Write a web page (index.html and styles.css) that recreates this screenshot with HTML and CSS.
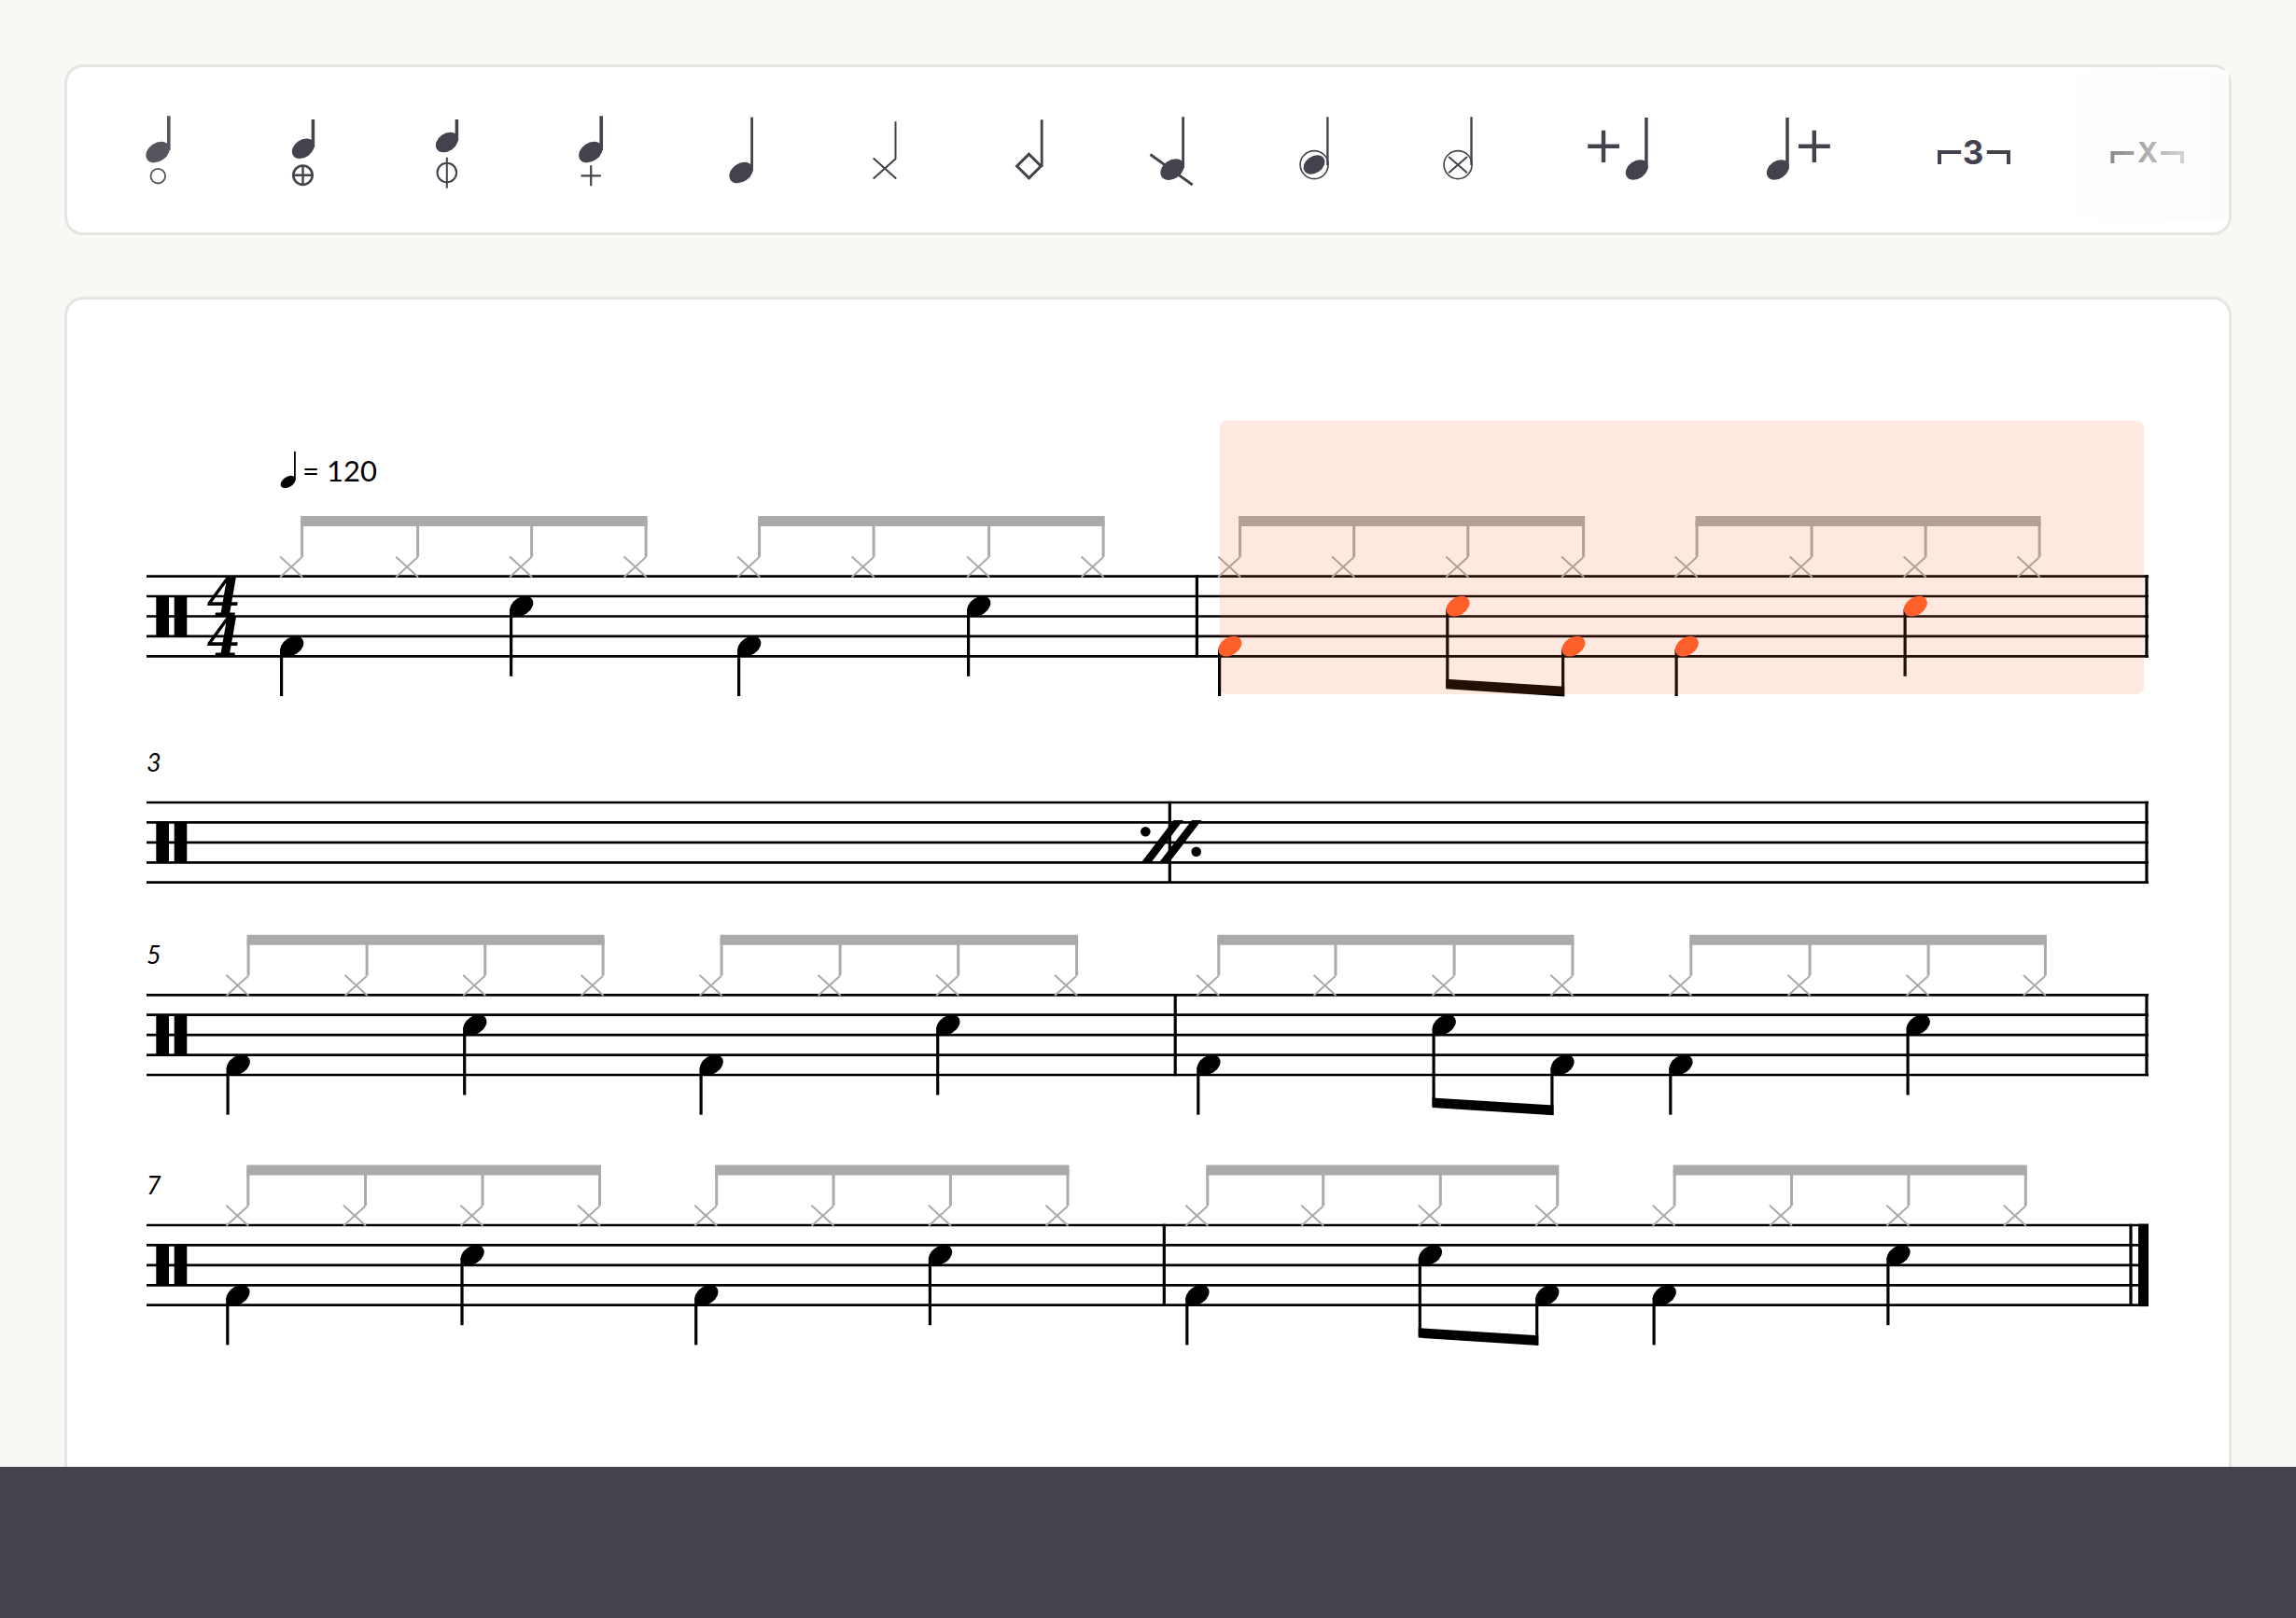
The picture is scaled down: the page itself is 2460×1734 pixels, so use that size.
FILE: index.html
```html
<!DOCTYPE html>
<html lang="en">
<head>
<meta charset="utf-8">
<title>Drum score editor</title>
<meta name="viewport" content="width=device-width, initial-scale=1">
<link rel="stylesheet" href="styles.css">
</head>
<body>
<svg class="defs" aria-hidden="true">
  <defs>
    <!-- Note heads, centred on 0,0 -->
    <ellipse id="head" rx="13.6" ry="9.5" transform="rotate(-33)"/>
    <ellipse id="tool-head" rx="13.8" ry="9.9" transform="rotate(-35)"/>
    <ellipse id="tool-head-small" rx="13" ry="9.4" transform="rotate(-35)"/>
    <!-- Origin of the score parts: note centre, top staff line -->
    <g id="hat">
      <path class="hat-x" d="M-12.4 -21.2L11.6 .8M-12.4 .8L11.1 -20.6"/>
      <path class="hat-stem" d="M11.1 -20.8V-60"/>
    </g>
    <path id="kick-stem" class="stem" d="M-10.9 78V128.4"/>
    <path id="snare-stem" class="stem" d="M-10.9 35V107.2"/>
    <path id="snare-stem-long" class="stem" d="M-10.9 35V119"/>
    <use id="kick-head" href="#head" x="0.3" y="75"/>
    <use id="snare-head" href="#head" x="0.3" y="32.1"/>
    <g id="kick"><use href="#kick-stem"/><use href="#kick-head"/></g>
    <g id="snare"><use href="#snare-stem"/><use href="#snare-head"/></g>
    <g id="snare-long"><use href="#snare-stem-long"/><use href="#snare-head"/></g>
    <g id="clef"><rect x="10.3" y="21.4" width="13.7" height="43"/><rect x="29.7" y="21.4" width="13.6" height="43"/></g>
    <path id="staff" class="staff" d="M0 0H2145M0 21.4H2145M0 42.9H2145M0 64.3H2145M0 85.7H2145"/>
  </defs>
</svg>

<main class="workspace">
  <section class="card toolbar" aria-label="Note tools">
    <div class="tools">
      <button class="tool" type="button" aria-label="Open">
        <svg class="icon icon-soft" viewBox="0 0 154 177"><use href="#tool-head" x="77" y="91"/><path stroke-width="3.6" d="M88.8 52.3V89"/><circle class="line" cx="77.3" cy="116.7" r="7.8" stroke-width="1.8"/></svg>
      </button>
      <button class="tool" type="button" aria-label="Half open">
        <svg class="icon" viewBox="0 0 154 177"><use href="#tool-head-small" x="78.8" y="87.2"/><path stroke-width="3.5" d="M89.4 56V86"/><circle class="line" cx="78.5" cy="115.7" r="10.2" stroke-width="2.6"/><path stroke-width="2.4" d="M68.5 115.7H88.5M78.5 105.7V125.7"/></svg>
      </button>
      <button class="tool" type="button" aria-label="Quarter open">
        <svg class="icon" viewBox="0 0 154 177"><use href="#tool-head-small" x="78.8" y="80.5"/><path stroke-width="3.5" d="M89.4 56V79"/><circle class="line" cx="78.8" cy="113" r="10.3" stroke-width="2.1"/><path stroke-width="2" d="M78.8 96.7V129.7"/></svg>
      </button>
      <button class="tool" type="button" aria-label="Closed">
        <svg class="icon" viewBox="0 0 154 177"><use href="#tool-head" x="78.8" y="91"/><path stroke-width="3.6" d="M90.2 52.3V89"/><path stroke-width="2.2" d="M68.5 116.3H89.8M79.2 105.3V127.3"/></svg>
      </button>
      <button class="tool" type="button" aria-label="Normal note">
        <svg class="icon" viewBox="0 0 154 177"><use href="#tool-head" x="86" y="113"/><path stroke-width="2.8" d="M97.6 53.7V111"/></svg>
      </button>
      <button class="tool" type="button" aria-label="Cross note">
        <svg class="icon" viewBox="0 0 154 177"><path class="line" stroke-width="2" d="M73.7 97.4L98.3 119.6M73.7 119.6L97.5 98.2V58.3"/></svg>
      </button>
      <button class="tool" type="button" aria-label="Diamond note">
        <svg class="icon" viewBox="0 0 154 177"><path class="line" stroke-width="3" d="M86.5 93.2L99.3 106L86.5 118.9L73.6 106Z"/><path stroke-width="2.8" d="M100.2 56.3V107"/></svg>
      </button>
      <button class="tool" type="button" aria-label="Slashed note">
        <svg class="icon" viewBox="0 0 154 177"><use href="#tool-head" x="86" y="109.6"/><path stroke-width="2.8" d="M97.6 53.3V108M62.4 93.5L107.6 126"/></svg>
      </button>
      <button class="tool" type="button" aria-label="Circled note">
        <svg class="icon" viewBox="0 0 154 177"><ellipse rx="12.4" ry="9" transform="translate(84 104.5) rotate(-35)"/><circle class="line" cx="84.1" cy="104.6" r="15" stroke-width="1.6"/><path stroke-width="2.4" d="M98.4 53.3V105"/></svg>
      </button>
      <button class="tool" type="button" aria-label="Circled cross note">
        <svg class="icon" viewBox="0 0 154 177"><path stroke-width="2" d="M74.2 96L94 113.3M74.2 113.3L94 96"/><circle class="line" cx="84.1" cy="104.6" r="15" stroke-width="1.6"/><path stroke-width="2.4" d="M98.5 53.3V105"/></svg>
      </button>
      <button class="tool tool-wide" type="button" aria-label="Add note before">
        <svg class="icon" viewBox="0 0 192 177"><path stroke-width="4.4" d="M69.2 84.7H103M86 67.7V102"/><use href="#tool-head-small" x="121.7" y="110"/><path stroke-width="3.5" d="M131.9 54V109"/></svg>
      </button>
      <button class="tool tool-wide" type="button" aria-label="Add note after">
        <svg class="icon" viewBox="0 0 192 177"><path stroke-width="4.4" d="M103 84.7H136.8M119.8 67.7V102"/><use href="#tool-head-small" x="80.8" y="110"/><path stroke-width="3.5" d="M91 54V109"/></svg>
      </button>
      <button class="tool tool-wide" type="button" aria-label="Triplet">
        <svg class="icon" viewBox="0 0 192 177"><path class="line" stroke-width="4" d="M62 104V91H85.2M112.8 91H136V104"/><text class="tuplet" x="98" y="103.6">3</text></svg>
      </button>
      <button class="tool tool-wide" type="button" aria-label="Custom tuplet">
        <svg class="icon" viewBox="0 0 192 177"><path class="line" stroke-width="4" d="M55.4 103V92H78.4M107 92H130V103"/><text class="tuplet tuplet-x" x="93" y="102">X</text></svg>
      </button>
    </div>
    <div class="fade"></div>
  </section>

  <section class="card score" aria-label="Score">
    <svg class="system" viewBox="0 -168.6 2145 300">
      <use href="#staff"/><use href="#clef"/>
      <text class="meter"><tspan x="83" y="42.6">4</tspan><tspan x="83" y="85.5">4</tspan></text>
      <ellipse rx="8.8" ry="5.6" transform="translate(151.6 -101.1) rotate(-35)"/><path class="tempo-stem" d="M158.9 -133.9V-103"/>
      <text class="tempo" x="167" y="-101.6">= 120</text>
      <path class="bar" d="M1125.4 -1.3V87M2143 -1.3V87"/>
      <g class="hats">
        <use href="#hat" x="155.5"/><use href="#hat" x="279.5"/><use href="#hat" x="401.5"/><use href="#hat" x="524"/>
        <use href="#hat" x="645.5"/><use href="#hat" x="768"/><use href="#hat" x="891.5"/><use href="#hat" x="1014"/>
        <use href="#hat" x="1160.5"/><use href="#hat" x="1282.6"/><use href="#hat" x="1404.7"/><use href="#hat" x="1528.5"/>
        <use href="#hat" x="1650"/><use href="#hat" x="1773"/><use href="#hat" x="1895"/><use href="#hat" x="2017"/>
        <path d="M165.1 -64.6H536.6V-53.6H165.1ZM655.1 -64.6H1026.6V-53.6H655.1ZM1170.1 -64.6H1541.1V-53.6H1170.1ZM1659.6 -64.6H2029.6V-53.6H1659.6Z"/>
      </g>
      <use href="#kick" x="155.5"/><use href="#snare" x="401.5"/><use href="#kick" x="645.5"/><use href="#snare" x="891.5"/>
      <use href="#kick-stem" x="1160.5"/><use href="#snare-stem-long" x="1404.7"/><use href="#kick-stem" x="1528.5"/><use href="#kick-stem" x="1650"/><use href="#snare-stem" x="1895"/>
      <path d="M1392.2 110.2L1519.2 118.2V128.9L1392.2 120.6Z"/>
      <rect class="selection" x="1150" y="-166.9" width="990" height="293.4" rx="8"/>
      <g class="selected">
        <use href="#kick-head" x="1160.5"/><use href="#snare-head" x="1404.7"/><use href="#kick-head" x="1528.5"/><use href="#kick-head" x="1650"/><use href="#snare-head" x="1895"/>
      </g>
    </svg>

    <svg class="system" viewBox="0 -61 2145 150">
      <text class="measure" x="0" y="-33">3</text>
      <use href="#staff"/><use href="#clef"/>
      <path class="bar" d="M1096.3 -1.3V87M2143 -1.3V87"/>
      <circle cx="1070.3" cy="31.3" r="5.3"/><circle cx="1124.7" cy="52.7" r="5.3"/>
      <path d="M1065.7 64.5H1076.3L1110.8 19H1100.3ZM1084.7 64.5H1095.5L1130.5 19H1120Z"/>
    </svg>

    <svg class="system" viewBox="0 -67.3 2145 198">
      <text class="measure" x="0" y="-33">5</text>
      <use href="#staff"/><use href="#clef"/>
      <path class="bar" d="M1102.2 -1.3V87M2143 -1.3V87"/>
      <g class="hats">
        <use href="#hat" x="98"/><use href="#hat" x="225"/><use href="#hat" x="351.6"/><use href="#hat" x="478"/>
        <use href="#hat" x="605"/><use href="#hat" x="732"/><use href="#hat" x="858.6"/><use href="#hat" x="985.5"/>
        <use href="#hat" x="1137.7"/><use href="#hat" x="1262.9"/><use href="#hat" x="1390"/><use href="#hat" x="1516.8"/>
        <use href="#hat" x="1643.7"/><use href="#hat" x="1771"/><use href="#hat" x="1898"/><use href="#hat" x="2023.3"/>
        <path d="M107.6 -64.6H490.6V-53.6H107.6ZM614.6 -64.6H998.1V-53.6H614.6ZM1147.3 -64.6H1529.4V-53.6H1147.3ZM1653.3 -64.6H2035.9V-53.6H1653.3Z"/>
      </g>
      <use href="#kick" x="98"/><use href="#snare" x="351.6"/><use href="#kick" x="605"/><use href="#snare" x="858.6"/>
      <use href="#kick" x="1137.7"/><use href="#snare-long" x="1390"/><use href="#kick" x="1516.8"/><use href="#kick" x="1643.7"/><use href="#snare" x="1898"/>
      <path d="M1377.5 110.2L1507.5 118.2V128.9L1377.5 120.6Z"/>
    </svg>

    <svg class="system" viewBox="0 -66 2145 198">
      <text class="measure" x="0" y="-33">7</text>
      <use href="#staff"/><use href="#clef"/>
      <path class="bar" d="M1090.3 -1.3V87M2126 -1.3V87"/><rect x="2134" y="-1.3" width="11" height="88.4"/>
      <g class="hats">
        <use href="#hat" x="97.7"/><use href="#hat" x="223.4"/><use href="#hat" x="348.9"/><use href="#hat" x="474.4"/>
        <use href="#hat" x="599.6"/><use href="#hat" x="724.9"/><use href="#hat" x="850.3"/><use href="#hat" x="975.9"/>
        <use href="#hat" x="1125.7"/><use href="#hat" x="1249.6"/><use href="#hat" x="1375.2"/><use href="#hat" x="1500.6"/>
        <use href="#hat" x="1626"/><use href="#hat" x="1751.4"/><use href="#hat" x="1876.8"/><use href="#hat" x="2002.2"/>
        <path d="M107.3 -64.6H487V-53.6H107.3ZM609.2 -64.6H988.5V-53.6H609.2ZM1135.3 -64.6H1513.2V-53.6H1135.3ZM1635.6 -64.6H2014.8V-53.6H1635.6Z"/>
      </g>
      <use href="#kick" x="97.7"/><use href="#snare" x="348.9"/><use href="#kick" x="599.6"/><use href="#snare" x="850.3"/>
      <use href="#kick" x="1125.7"/><use href="#snare-long" x="1375.2"/><use href="#kick" x="1500.6"/><use href="#kick" x="1626"/><use href="#snare" x="1876.8"/>
      <path d="M1362.7 110.2L1491.3 118.2V128.9L1362.7 120.6Z"/>
    </svg>
  </section>
</main>
<footer class="player"></footer>
</body>
</html>
```

FILE: styles.css
```css
* {
  box-sizing: border-box;
}

body {
  display: grid;
  grid-template-rows: minmax(0, 1fr) 162px;
  height: 100vh;
  margin: 0;
  background: #f9f8f4;
  color: #000;
  font-family: Lato, "Liberation Sans", sans-serif;
}

.defs {
  position: absolute;
  width: 0;
  height: 0;
}

.workspace {
  display: flex;
  flex-direction: column;
  gap: 66px;
  padding: 69px 69px 0;
  overflow: hidden;
}

.card {
  flex: none;
  border: 3px solid #e6e5e3;
  border-radius: 20px;
  background: #fff;
}

.toolbar {
  position: relative;
}

.tools {
  display: flex;
  padding-left: 20px;
  overflow: hidden;
}

.tool {
  flex: none;
  width: 154px;
  padding: 0;
  border: 0;
  background: none;
  cursor: pointer;
}

.tool-wide {
  width: 192px;
}

.icon {
  display: block;
  width: 100%;
  fill: #44434d;
}

.icon path,
.icon .line {
  stroke: #44434d;
}

.icon .line {
  fill: none;
}

.icon-soft {
  opacity: 0.9;
}

.tuplet {
  font-family: Inter, "Open Sans", sans-serif;
  font-size: 35px;
  font-weight: 700;
  text-anchor: middle;
}

.tuplet-x {
  font-size: 30px;
}

.fade {
  position: absolute;
  top: 3px;
  right: 0;
  width: 207px;
  height: 162px;
  background: linear-gradient(to right, rgba(255, 255, 255, 0), #fdfcfa);
  pointer-events: none;
}

.score {
  display: flex;
  flex-direction: column;
  gap: 50px;
  padding: 128px 86px 180px 85px;
}

.system {
  display: block;
  width: 100%;
  overflow: visible;
}

.staff,
.bar,
.stem {
  fill: none;
  stroke: #000;
  stroke-width: 2.7;
}

.bar,
.stem {
  stroke-width: 3.2;
}

.tempo-stem {
  stroke: #000;
  stroke-width: 1.8;
}

.hats {
  fill: #aaa;
}

.hat-x,
.hat-stem {
  fill: none;
  stroke: #aaa;
  stroke-width: 2;
}

.hat-stem {
  stroke-width: 3;
}

.selection {
  fill: #ff5f2b;
  opacity: 0.145;
}

.selected {
  fill: #ff5f2b;
}

.meter {
  font-family: "DejaVu Serif Condensed", "DejaVu Serif", serif;
  font-size: 58px;
  font-style: italic;
  font-weight: bold;
  text-anchor: middle;
}

.tempo {
  font-size: 31px;
}

.measure {
  font-size: 27px;
  font-style: italic;
}

.player {
  background: #44434d;
}
```
